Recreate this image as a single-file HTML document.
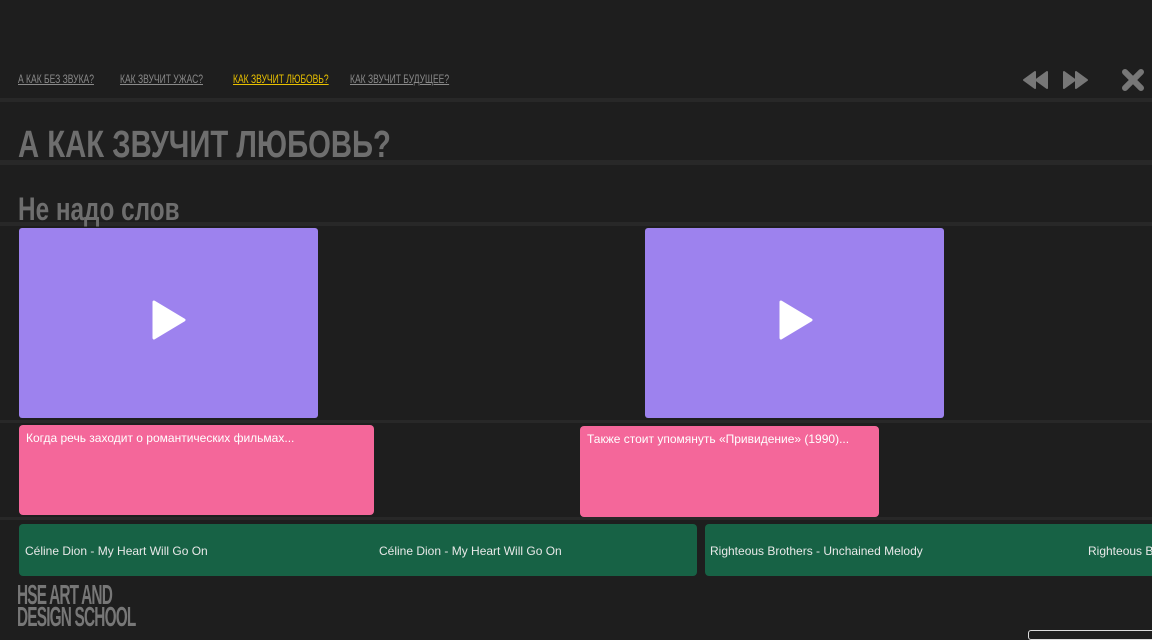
<!DOCTYPE html>
<html><head><meta charset="utf-8"><style>
*{margin:0;padding:0;box-sizing:border-box}
body{width:1152px;height:634px;background:#1e1e1e;position:relative;overflow:hidden;font-family:"Liberation Sans",sans-serif}
.a{position:absolute}
.band{position:absolute;left:0;width:1152px;background:#282828}
.nav{position:absolute;top:72px;font-size:12px;color:#8a8a8a;text-decoration:underline;white-space:nowrap;transform:scaleX(0.71);transform-origin:left}
.cond{font-weight:bold;color:#6e6e6e;white-space:nowrap;transform-origin:left}
.vid{position:absolute;background:#9d82ee;border-radius:3px}
.pink{position:absolute;background:#f4679a;border-radius:4px;color:#fff;font-size:12px;padding:6px 7px}
.grn{position:absolute;background:#176245;border-radius:4px;color:#e8e8e8;font-size:12px;overflow:hidden}
.grn span{position:absolute;top:20px;white-space:nowrap}
</style></head><body>
<div class="band" style="top:98px;height:4px"></div>
<div class="band" style="top:160px;height:5px"></div>
<div class="band" style="top:222px;height:4px"></div>
<div class="band" style="top:420px;height:3px"></div>
<div class="band" style="top:517px;height:3px"></div>
<a class="nav" style="left:18px">А КАК БЕЗ ЗВУКА?</a>
<a class="nav" style="left:120px">КАК ЗВУЧИТ УЖАС?</a>
<a class="nav" style="left:233px;color:#e8c000">КАК ЗВУЧИТ ЛЮБОВЬ?</a>
<a class="nav" style="left:350px">КАК ЗВУЧИТ БУДУЩЕЕ?</a>
<svg class="a" style="left:1022px;top:70px" width="26" height="20" viewBox="0 0 26 20"><path d="M13 2 L2 10 L13 18Z M25 2 L14 10 L25 18Z" fill="#777" stroke="#777" stroke-linejoin="round" stroke-width="2"/></svg>
<svg class="a" style="left:1063px;top:70px" width="26" height="20" viewBox="0 0 26 20"><path d="M1 2 L12 10 L1 18Z M13 2 L24 10 L13 18Z" fill="#777" stroke="#777" stroke-linejoin="round" stroke-width="2"/></svg>
<svg class="a" style="left:1121px;top:68px" width="24" height="24" viewBox="0 0 24 24"><path d="M4 4L20 20M20 4L4 20" stroke="#777" stroke-width="6" stroke-linecap="round"/></svg>
<div class="a cond" style="left:18px;top:124px;font-size:38px;line-height:42px;transform:scaleX(0.77)">А КАК ЗВУЧИТ ЛЮБОВЬ?</div>
<div class="a cond" style="left:18px;top:190px;font-size:32px;line-height:38px;transform:scaleX(0.76)">Не надо слов</div>
<div class="vid" style="left:19px;top:228px;width:299px;height:190px"></div>
<div class="vid" style="left:645px;top:228px;width:299px;height:190px"></div>
<svg class="a" style="left:150px;top:300px" width="38" height="40"><path d="M4 2 L34 20 L4 38Z" fill="#fff" stroke="#fff" stroke-width="3" stroke-linejoin="round"/></svg>
<svg class="a" style="left:777px;top:300px" width="38" height="40"><path d="M4 2 L34 20 L4 38Z" fill="#fff" stroke="#fff" stroke-width="3" stroke-linejoin="round"/></svg>
<div class="pink" style="left:19px;top:425px;width:355px;height:90px">Когда речь заходит о романтических фильмах...</div>
<div class="pink" style="left:580px;top:426px;width:299px;height:91px">Также стоит упомянуть «Привидение» (1990)...</div>
<div class="grn" style="left:19px;top:524px;width:678px;height:52px"><span style="left:6px">Céline Dion - My Heart Will Go On</span><span style="left:360px">Céline Dion - My Heart Will Go On</span></div>
<div class="grn" style="left:705px;top:524px;width:460px;height:52px"><span style="left:5px">Righteous Brothers - Unchained Melody</span><span style="left:383px">Righteous Brothers</span></div>
<div class="a cond" style="left:17px;top:584px;font-size:28px;line-height:22px;letter-spacing:-1.5px;color:#777;transform:scaleX(0.55)">HSE ART AND<br>DESIGN SCHOOL</div>
<div class="a" style="left:1028px;top:630px;width:130px;height:10px;border:1px solid #ddd;border-radius:3px;background:#1e1e1e"></div>
</body></html>
